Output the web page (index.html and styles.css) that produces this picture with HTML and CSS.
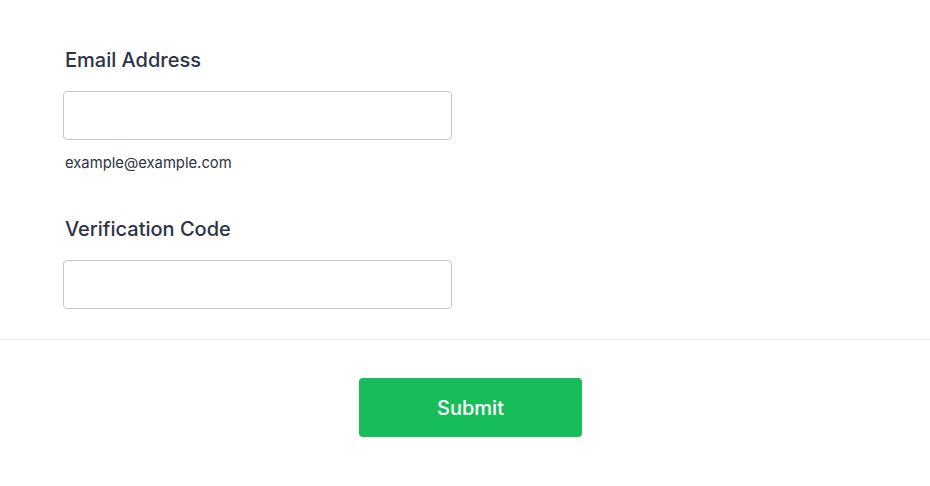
FILE: index.html
```html
<!DOCTYPE html>
<html>
<head>
<meta charset="utf-8">
<link rel="stylesheet" href="styles.css">
</head>
<body>
<form class="form">
  <div class="fields">
    <div class="field">
      <label class="label">Email Address</label>
      <input class="input" type="text">
      <div class="hint">example@example.com</div>
    </div>
    <div class="field field-second">
      <label class="label">Verification Code</label>
      <input class="input" type="text">
    </div>
  </div>
  <div class="actions">
    <button class="submit" type="button">Submit</button>
  </div>
</form>
</body>
</html>
```

FILE: styles.css
```css
html, body {
  margin: 0;
  padding: 0;
  background: #ffffff;
  font-family: Inter, "Noto Sans", sans-serif;
}
.form {
  display: flex;
  flex-direction: column;
  width: 930px;
}
.fields {
  padding: 48px 0 30px 63px;
  border-bottom: 1px solid #e6e8ee;
}
.field {
  display: flex;
  flex-direction: column;
  align-items: flex-start;
}
.field-second {
  margin-top: 45px;
}
.label {
  font-size: 20px;
  font-weight: 500;
  line-height: 25px;
  color: #2c3345;
  margin-left: 2px;
  margin-bottom: 18px;
}
.input {
  box-sizing: border-box;
  width: 389px;
  height: 49px;
  border: 1px solid #c3c6d6;
  border-radius: 4px;
  background: #fff;
  margin: 0;
}
.hint {
  font-size: 14.8px;
  line-height: 18px;
  color: #2c3345;
  margin-top: 14px;
  margin-left: 2px;
}
.actions {
  display: flex;
  justify-content: center;
  padding: 38px 0 49px 0;
}
.submit {
  width: 223px;
  height: 59px;
  border: none;
  border-radius: 4px;
  background: #18bd5b;
  color: #ffffff;
  font-family: Inter, "Noto Sans", sans-serif;
  font-size: 20px;
  font-weight: 500;
  margin-left: 11px;
}
```
